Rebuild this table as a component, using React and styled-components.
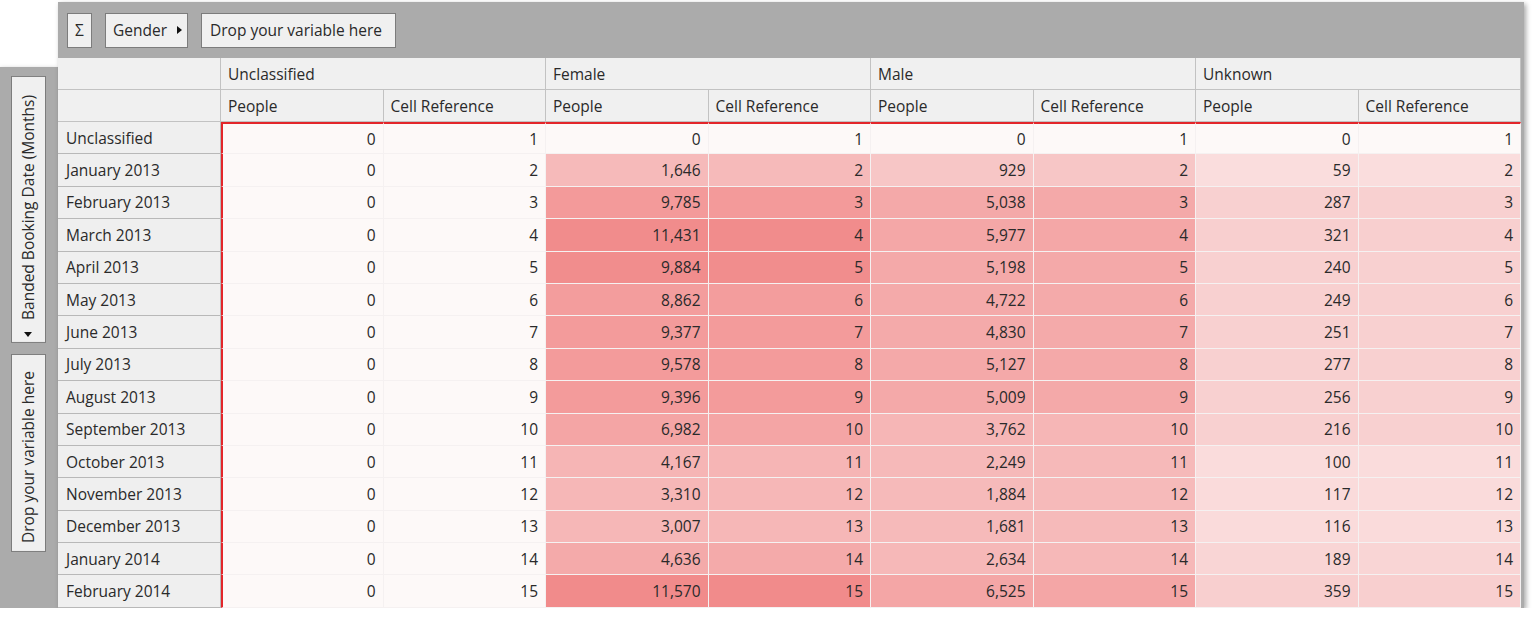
import React from "react";
import styled, { createGlobalStyle } from "styled-components";

const GlobalStyle = createGlobalStyle`
  html, body {
    margin: 0;
    padding: 0;
    background: #fff;
  }
  body {
    font-family: "Open Sans", "Noto Sans", sans-serif;
    font-size: 15.5px;
    color: #2a2a2a;
  }
`;

const months = [
  "Unclassified",
  "January 2013",
  "February 2013",
  "March 2013",
  "April 2013",
  "May 2013",
  "June 2013",
  "July 2013",
  "August 2013",
  "September 2013",
  "October 2013",
  "November 2013",
  "December 2013",
  "January 2014",
  "February 2014",
];

const groups = [
  { name: "Unclassified", people: Array(15).fill(0) },
  {
    name: "Female",
    people: [0, 1646, 9785, 11431, 9884, 8862, 9377, 9578, 9396, 6982, 4167, 3310, 3007, 4636, 11570],
  },
  {
    name: "Male",
    people: [0, 929, 5038, 5977, 5198, 4722, 4830, 5127, 5009, 3762, 2249, 1884, 1681, 2634, 6525],
  },
  {
    name: "Unknown",
    people: [0, 59, 287, 321, 240, 249, 251, 277, 256, 216, 100, 117, 116, 189, 359],
  },
];

// value -> green/blue channel of the heat colour, read off the report
const stops = [
  [0, 249],
  [1, 222],
  [120, 219],
  [190, 213],
  [216, 208],
  [360, 207],
  [929, 198],
  [1646, 186],
  [4200, 181],
  [4600, 170],
  [7000, 165],
  [9000, 156],
  [9800, 154],
  [9850, 141],
  [12000, 139],
];

const heat = (v) => {
  if (!v) return "#fdf9f8";
  let g = stops[stops.length - 1][1];
  for (let i = 1; i < stops.length; i++) {
    const [v1, g1] = stops[i];
    if (v <= v1) {
      const [v0, g0] = stops[i - 1];
      g = g0 + ((v - v0) / (v1 - v0)) * (g1 - g0);
      break;
    }
  }
  const r = Math.round(253 - (249 - g) * 0.11);
  g = Math.round(g);
  return `rgb(${r}, ${g}, ${g})`;
};

const fmt = (n) => n.toLocaleString("en-US");

const RightArrow = () => (
  <svg width="5" height="8" viewBox="0 0 5 8">
    <path d="M0 0 L5 4 L0 8 Z" fill="#111" />
  </svg>
);

const PivotGrid = () => (
  <Widget>
    <SidePanel>
      <VerticalButton $arrow>
        <svg width="8" height="5" viewBox="0 0 8 5">
          <path d="M0 5 L4 0 L8 5 Z" fill="#111" />
        </svg>
        <span>Banded Booking Date (Months)</span>
      </VerticalButton>
      <VerticalButton>
        <span>Drop your variable here</span>
      </VerticalButton>
    </SidePanel>

    <Main>
      <Toolbar>
        <FieldButton $narrow>Σ</FieldButton>
        <FieldButton>
          Gender
          <RightArrow />
        </FieldButton>
        <FieldButton $wide>Drop your variable here</FieldButton>
      </Toolbar>

      <TableArea>
        <Grid>
          <HeadCell />
          {groups.map((g) => (
            <HeadCell key={g.name} $span={2}>
              {g.name}
            </HeadCell>
          ))}
          <HeadCell />
          {groups.map((g) => (
            <React.Fragment key={g.name}>
              <HeadCell>People</HeadCell>
              <HeadCell>Cell Reference</HeadCell>
            </React.Fragment>
          ))}

          {months.map((m, i) => (
            <React.Fragment key={m}>
              <RowHead>{m}</RowHead>
              {groups.map((g, gi) => (
                <React.Fragment key={g.name}>
                  <DataCell $bg={heat(g.people[i])} $first={gi === 0} $top={i === 0}>
                    {fmt(g.people[i])}
                  </DataCell>
                  <DataCell $bg={heat(g.people[i])} $top={i === 0}>
                    {i + 1}
                  </DataCell>
                </React.Fragment>
              ))}
            </React.Fragment>
          ))}
        </Grid>
      </TableArea>
    </Main>
  </Widget>
);

const App = () => (
  <>
    <GlobalStyle />
    <PivotGrid />
  </>
);

const Widget = styled.div`
  display: flex;
  align-items: stretch;
  margin-top: 2px;
  width: 1524px;
`;

const SidePanel = styled.div`
  width: 58px;
  margin-top: 65px;
  padding: 9px 12px 0 11px;
  box-sizing: border-box;
  background: #ababab;
  display: flex;
  flex-direction: column;
  gap: 11px;
  box-shadow: 0 2px 5px rgba(0, 0, 0, 0.35);
`;

const VerticalButton = styled.div`
  width: 35px;
  box-sizing: border-box;
  padding: ${(p) => (p.$arrow ? "5px 0 18px" : "8px 0 16px")};
  background: #f0f0f0;
  border: 1px solid #7c7c7c;
  writing-mode: vertical-rl;
  transform: rotate(180deg);
  display: flex;
  align-items: center;
  gap: 12px;
  white-space: nowrap;
  line-height: 33px;

  & svg {
    flex: none;
  }
`;

const Main = styled.div`
  position: relative;
  z-index: 1;
  width: 1466px;
  display: flex;
  flex-direction: column;
  box-shadow: 2px 2px 5px rgba(0, 0, 0, 0.35);
`;

const Toolbar = styled.div`
  height: 56px;
  background: #ababab;
  display: flex;
  align-items: center;
  gap: 13px;
  padding-left: 9px;
`;

const FieldButton = styled.div`
  height: 35px;
  box-sizing: border-box;
  background: #f0f0f0;
  border: 1px solid #7c7c7c;
  display: flex;
  align-items: center;
  justify-content: ${(p) => (p.$narrow ? "center" : "flex-start")};
  width: ${(p) => (p.$narrow ? "25px" : p.$wide ? "195px" : "83px")};
  padding: ${(p) => (p.$narrow ? "0" : p.$wide ? "0 8px" : "0 4px 0 7px")};
  gap: 10px;
  white-space: nowrap;

  & svg {
    flex: none;
  }
`;

const TableArea = styled.div`
  background: #ababab;
  padding-right: 3px;
`;

const Grid = styled.div`
  display: grid;
  grid-template-columns: 163px repeat(8, 162.5px);
  grid-template-rows: 32px 32px repeat(15, 32.4px);
`;

const HeadCell = styled.div`
  grid-column: span ${(p) => p.$span || 1};
  box-sizing: border-box;
  background: #f0f0f0;
  border-right: 1px solid #c2c2c2;
  border-bottom: 1px solid #c2c2c2;
  padding-left: 7px;
  display: flex;
  align-items: center;
  white-space: nowrap;
  overflow: hidden;
`;

const RowHead = styled.div`
  box-sizing: border-box;
  background: #efefef;
  border-right: 1px solid #b8b8b8;
  border-bottom: 1px solid #b8b8b8;
  padding-left: 8px;
  display: flex;
  align-items: center;
  white-space: nowrap;
`;

const DataCell = styled.div`
  box-sizing: border-box;
  background: ${(p) => p.$bg};
  border-right: 1px solid #f5f1f1;
  border-bottom: 1px solid #f5f1f1;
  border-left: ${(p) => (p.$first ? "2px solid #e3262a" : "none")};
  border-top: ${(p) => (p.$top ? "2px solid #e3262a" : "none")};
  padding-right: 7px;
  display: flex;
  align-items: center;
  justify-content: flex-end;
`;

export default App;
